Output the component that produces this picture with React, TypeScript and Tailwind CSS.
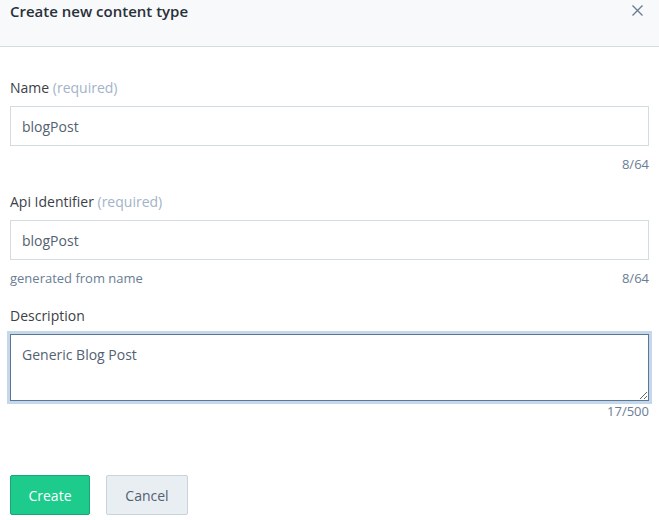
import React, { useState } from "react";

const Label: React.FC<{ text: string; required?: boolean }> = ({ text, required }) => (
    <div className="text-[14px] text-[#3b4147] leading-[20px] mb-[8px]">
        {text}
        {required && <span className="text-[#a3b3c7]"> (required)</span>}
    </div>
);

const App: React.FC = () => {
    const [name, setName] = useState("blogPost");
    const [apiId, setApiId] = useState("blogPost");
    const [description, setDescription] = useState("Generic Blog Post");

    return (
        <div className="w-[659px] h-[520px] bg-white overflow-hidden font-['Open_Sans',sans-serif]">
            {/* header */}
            <div className="h-[47px] bg-[#f7f9fa] border-b border-[#d3dce0] flex items-start justify-between px-[10px]">
                <h1 className="text-[15px] font-semibold text-[#2a3039] leading-[22px] mt-0">Create new content type</h1>
                <button className="text-[#6a7d95] mt-[4px] mr-[5px]">
                    <svg width="13" height="13" viewBox="0 0 13 13" fill="none" stroke="currentColor" strokeWidth="1.4">
                        <path d="M1.5 1.5l10 10M11.5 1.5l-10 10" />
                    </svg>
                </button>
            </div>

            {/* form */}
            <div className="px-[10px] pt-[31px]">
                <Label text="Name" required />
                <input
                    value={name}
                    onChange={(e) => setName(e.target.value)}
                    className="w-full h-[40px] border border-[#d3dce0] px-[11px] text-[14px] text-[#536171] outline-none"
                />
                <div className="flex justify-end text-[13px] text-[#6a7d95] leading-[18px] mt-[9px]">
                    <span>{name.length}/64</span>
                </div>

                <div className="mt-[19px]">
                    <Label text="Api Identifier" required />
                    <input
                        value={apiId}
                        onChange={(e) => setApiId(e.target.value)}
                        className="w-full h-[40px] border border-[#d3dce0] px-[11px] text-[14px] text-[#536171] outline-none"
                    />
                    <div className="flex justify-between text-[13px] text-[#6a7d95] leading-[18px] mt-[9px]">
                        <span>generated from name</span>
                        <span>{apiId.length}/64</span>
                    </div>
                </div>

                <div className="mt-[19px]">
                    <Label text="Description" />
                    <textarea
                        value={description}
                        onChange={(e) => setDescription(e.target.value)}
                        className="w-full h-[67px] border border-[#5b7796] shadow-[0_0_0_3px_#c5d7ea] px-[11px] py-[10px] text-[14px] text-[#536171] outline-none block leading-[20px]"
                    />
                    <div className="flex justify-end text-[13px] text-[#6a7d95] leading-[18px] mt-[1px]">
                        <span>{description.length}/500</span>
                    </div>
                </div>

                <div className="flex gap-[16px] mt-[55px]">
                    <button className="w-[80px] h-[40px] rounded-[2px] bg-[#1dcb8d] border border-[#17a674] text-white text-[14px]">
                        Create
                    </button>
                    <button className="w-[82px] h-[40px] rounded-[2px] bg-[#e9eef3] border border-[#c9d3db] text-[#536171] text-[14px]">
                        Cancel
                    </button>
                </div>
            </div>
        </div>
    );
};

export default App;
